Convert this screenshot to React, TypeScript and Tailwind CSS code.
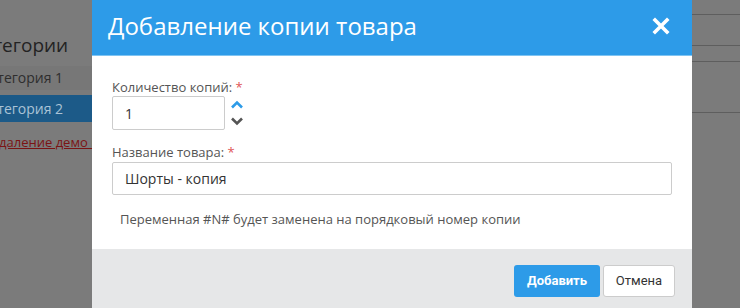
import React from "react";

export default function App() {
  const font = { fontFamily: '"Open Sans", "Noto Sans", sans-serif' };
  return (
    <div className="relative w-[740px] h-[308px] overflow-hidden bg-[#7b7b7b]" style={font}>
      {/* background page under overlay */}
      <div className="flex w-[740px] h-[308px]">
        <div className="w-[92px] shrink-0 overflow-hidden">
          <div className="ml-[-26px] w-[220px]">
            <div className="h-[30px]" />
            <div className="h-[36px] text-[19px] leading-[30px] text-[#232323] ml-[-3px]">Категории</div>
            <div className="h-[24px] bg-[#777777] text-[14px] leading-[24px] text-[#2e2e2e] pl-[7px]">Категория 1</div>
            <div className="h-[5px]" />
            <div className="h-[27px] bg-[#1c5a88] text-[14px] leading-[28px] text-[#aac3d6] pl-[7px]">Категория 2</div>
            <div className="pt-[10px] text-[13px] leading-[20px] text-[#7b1414] underline pl-[17px]">Удаление демо категорий</div>
          </div>
        </div>
        <div className="flex-1" />
        <div className="w-[48px] shrink-0 flex flex-col">
          <div className="h-[15px] border-b border-[#5e5e5e]" />
          <div className="h-[31px] border-b border-[#5e5e5e]" />
          <div className="h-[16px] border-b border-[#5e5e5e]" />
          <div className="h-[51px] border-b border-[#5e5e5e]" />
        </div>
      </div>

      {/* modal */}
      <div className="absolute left-[92px] top-0 w-[600px] h-[320px] flex flex-col bg-white">
        <div className="h-[56px] shrink-0 bg-[#2d9be8] border-b border-[#7fc4f2] flex items-center justify-between pl-[16px] pr-[22px]">
          <div className="text-[24px] text-white leading-[32px] mt-[-4px]">Добавление копии товара</div>
          <svg width="18" height="18" viewBox="0 0 18 18" className="mt-[-4px]">
            <path d="M3 3 L15 15 M15 3 L3 15" stroke="#ffffff" strokeWidth="3.6" strokeLinecap="square" />
          </svg>
        </div>
        <div className="h-[193px] shrink-0 px-[20px] pt-[22px]">
          <div className="text-[13px] leading-[18px] text-[#555555]">
            Количество копий: <span className="text-[#e05555]">*</span>
          </div>
          <div className="flex items-center mt-[0px]">
            <div className="w-[113px] h-[34px] border border-[#cccccc] rounded-[2px] flex items-center pl-[12px] text-[14px] text-[#333333]">1</div>
            <div className="flex flex-col ml-[5px] gap-[8px]">
              <svg width="14" height="9" viewBox="0 0 14 9">
                <path d="M2 7.5 L7 2.5 L12 7.5" stroke="#2d9be8" strokeWidth="2.6" fill="none" />
              </svg>
              <svg width="14" height="9" viewBox="0 0 14 9">
                <path d="M2 1.5 L7 6.5 L12 1.5" stroke="#555555" strokeWidth="2.6" fill="none" />
              </svg>
            </div>
          </div>
          <div className="text-[13px] leading-[18px] text-[#555555] mt-[13px]">
            Название товара: <span className="text-[#e05555]">*</span>
          </div>
          <div className="w-[560px] h-[33px] mt-[1px] border border-[#cccccc] rounded-[2px] flex items-center pl-[12px] text-[14px] text-[#333333]">
            Шорты - копия
          </div>
          <div className="text-[13px] leading-[18px] text-[#555555] mt-[15px] pl-[8px]">
            Переменная #N# будет заменена на порядковый номер копии
          </div>
        </div>
        <div className="flex-1 bg-[#e6e7e8] flex justify-end items-start pt-[16px] pr-[17px] gap-[3px]">
          <button className="w-[86px] h-[32px] rounded-[3px] bg-[#2d9be8] text-white text-[13px] font-bold" style={{ fontFamily: '"Roboto", "Open Sans", sans-serif' }}>
            Добавить
          </button>
          <button className="w-[72px] h-[32px] rounded-[3px] bg-white border border-[#cccccc] text-[#333333] text-[13px]" style={{ fontFamily: '"Roboto", "Open Sans", sans-serif' }}>
            Отмена
          </button>
        </div>
      </div>
    </div>
  );
}
